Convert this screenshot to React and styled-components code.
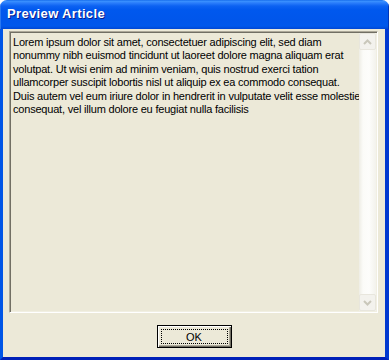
import React from "react";
import styled, { createGlobalStyle } from "styled-components";

const Global = createGlobalStyle`
  html, body { margin: 0; padding: 0; background: #ffffff; }
  body { width: 389px; height: 360px; overflow: hidden; }
`;

const Window = styled.div`
  width: 389px;
  height: 360px;
  display: flex;
  flex-direction: column;
  box-sizing: border-box;
  border-radius: 7px 7px 0 0;
  overflow: hidden;
`;

const TitleBar = styled.div`
  height: 29px;
  flex: none;
  display: flex;
  align-items: center;
  padding: 0 0 2px 7px;
  box-sizing: border-box;
  background: linear-gradient(
    to bottom,
    #0a5fe6 0px,
    #3c94ff 1px,
    #2a7dfb 3px,
    #0c62f2 6px,
    #0058ee 10px,
    #0056eb 20px,
    #0058ec 26px,
    #0047d4 29px
  );
  box-shadow: inset 1px 0 0 #2a78f0, inset -1px 0 0 #0036b8;
`;

const Title = styled.span`
  font-family: "Liberation Sans", Arial, sans-serif;
  font-weight: bold;
  font-size: 13px;
  color: #ffffff;
  text-shadow: 1px 1px 0 #0a1d8c;
  letter-spacing: 0.35px;
`;

const Frame = styled.div`
  flex: 1;
  display: flex;
  flex-direction: column;
  align-items: center;
  background: #ece9d8;
  border-left: 3px solid #0055e6;
  border-right: 4px solid #0038d0;
  border-bottom: 3px solid #0020b8;
  padding: 2px 7px 9px 6px;
  box-sizing: border-box;
`;

const TextBox = styled.div`
  align-self: stretch;
  height: 282px;
  flex: none;
  display: flex;
  box-sizing: border-box;
  border-top: 1px solid #aca899;
  border-left: 1px solid #aca899;
  border-right: 1px solid #ffffff;
  border-bottom: 1px solid #ffffff;
  box-shadow: inset 1px 1px 0 #716f64, inset -1px -1px 0 #f1efe2;
  padding: 1px;
`;

const TextArea = styled.div`
  flex: 1;
  padding: 3px 2px;
  font-family: "Liberation Sans", Arial, sans-serif;
  font-size: 11px;
  letter-spacing: -0.2px;
  line-height: 13.4px;
  color: #000000;
  white-space: nowrap;
  overflow: hidden;
`;

const Line = styled.div``;

const ScrollBar = styled.div`
  width: 17px;
  flex: none;
  display: flex;
  flex-direction: column;
  justify-content: space-between;
  background: linear-gradient(to right, #eeede5 0px, #fbfbf8 4px, #fdfdfb 10px, #f3f2ec 17px);
`;

const ArrowButton = styled.div`
  width: 17px;
  height: 17px;
  box-sizing: border-box;
  border: 1px solid #e8e6dd;
  border-radius: 2px;
  background: #f3f2ed;
  display: flex;
  align-items: center;
  justify-content: center;
`;

const Footer = styled.div`
  flex: 1;
  display: flex;
  align-items: flex-end;
  justify-content: center;
`;

const Button = styled.button`
  width: 75px;
  height: 23px;
  margin-left: 1px;
  box-sizing: border-box;
  background: #ece9d8;
  border: 1px solid #000000;
  box-shadow: inset 1px 1px 0 #ffffff, inset -1px -1px 0 #716f64, inset -2px -2px 0 #aca899;
  display: flex;
  align-items: stretch;
  justify-content: stretch;
  padding: 3px;
  font-family: "Liberation Sans", Arial, sans-serif;
  font-size: 11px;
  color: #000000;
`;

const Focus = styled.span`
  flex: 1;
  border: 1px dotted #000000;
  display: flex;
  align-items: center;
  justify-content: center;
`;

const Chevron = ({ down }) => (
  <svg width="9" height="6" viewBox="0 0 9 6">
    <path
      d={down ? "M1 1 L4.5 4.5 L8 1" : "M1 5 L4.5 1.5 L8 5"}
      fill="none"
      stroke="#c9c7ba"
      strokeWidth="2"
    />
  </svg>
);

const lines = [
  "Lorem ipsum dolor sit amet, consectetuer adipiscing elit, sed diam",
  "nonummy nibh euismod tincidunt ut laoreet dolore magna aliquam erat",
  "volutpat. Ut wisi enim ad minim veniam, quis nostrud exerci tation",
  "ullamcorper suscipit lobortis nisl ut aliquip ex ea commodo consequat.",
  "Duis autem vel eum iriure dolor in hendrerit in vulputate velit esse molestie",
  "consequat, vel illum dolore eu feugiat nulla facilisis",
];

export default function App() {
  return (
    <>
      <Global />
      <Window>
        <TitleBar>
          <Title>Preview Article</Title>
        </TitleBar>
        <Frame>
          <TextBox>
            <TextArea>
              {lines.map((l, i) => (
                <Line key={i}>{l}</Line>
              ))}
            </TextArea>
            <ScrollBar>
              <ArrowButton>
                <Chevron />
              </ArrowButton>
              <ArrowButton>
                <Chevron down />
              </ArrowButton>
            </ScrollBar>
          </TextBox>
          <Footer>
            <Button>
              <Focus>OK</Focus>
            </Button>
          </Footer>
        </Frame>
      </Window>
    </>
  );
}
